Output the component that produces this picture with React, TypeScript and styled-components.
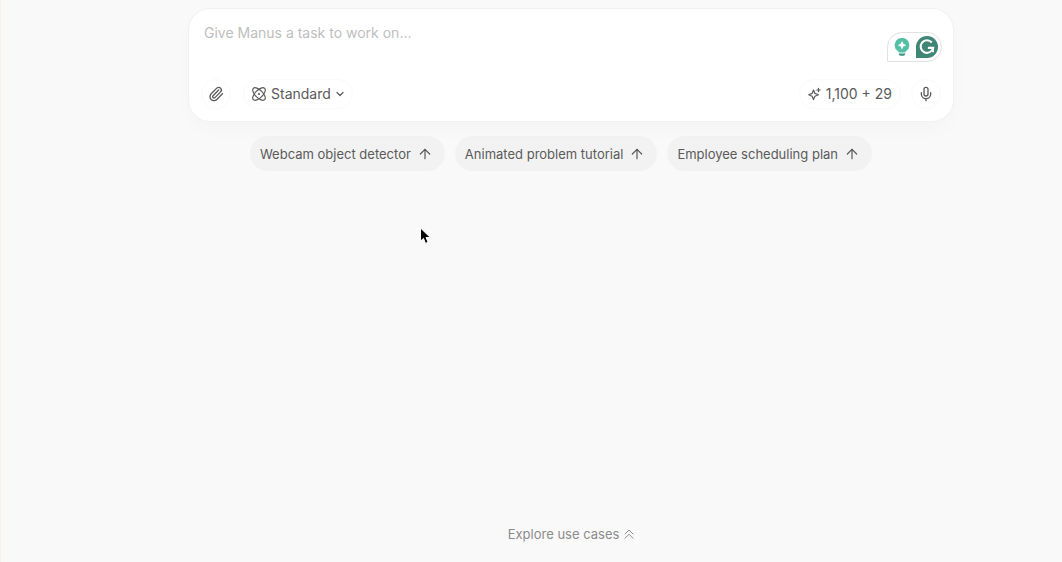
import React from "react";
import styled, { createGlobalStyle } from "styled-components";
import { ArrowUp, Mic, Paperclip } from "lucide-react";

const GlobalStyle = createGlobalStyle`
  *, *::before, *::after { box-sizing: border-box; }
  body {
    margin: 0;
    background: #f9f9f9;
    font-family: Inter, "Liberation Sans", sans-serif;
    color: #5a5a5a;
  }
  button, textarea { font: inherit; color: inherit; }
`;

const Page = styled.main`
  position: relative;
  display: flex;
  flex-direction: column;
  align-items: center;
  min-height: 100vh;
  padding: 8px 0 17px 79px;
  border-left: 1px solid #fcefe6;
`;

const Composer = styled.form`
  position: relative;
  display: flex;
  flex-direction: column;
  width: 100%;
  max-width: 766px;
  padding: 12px;
  border: 1px solid #f1f1f1;
  border-radius: 22px;
  background: #ffffff;
  box-shadow: 0 8px 20px rgba(0, 0, 0, 0.02);
`;

const Prompt = styled.textarea`
  width: 100%;
  height: 58px;
  padding: 0 60px 0 3px;
  border: 0;
  outline: 0;
  resize: none;
  background: transparent;
  font-size: 14px;
  line-height: 24px;
  &::placeholder { color: #bebebe; opacity: 1; }
`;

const Toolbar = styled.div`
  display: flex;
  align-items: center;
  justify-content: space-between;
`;

const ToolGroup = styled.div<{ $gap: number }>`
  display: flex;
  align-items: center;
  gap: ${(p) => p.$gap}px;
`;

const ToolButton = styled.button<{ $round?: boolean }>`
  display: flex;
  align-items: center;
  justify-content: center;
  gap: 5px;
  width: ${(p) => (p.$round ? "30px" : "auto")};
  height: 30px;
  padding: ${(p) => (p.$round ? "0" : "0 8px")};
  border: 1px solid #fafafa;
  border-radius: 15px;
  background: transparent;
  font-size: 14px;
  line-height: 20px;
`;

const Suggestions = styled.nav`
  display: flex;
  flex-wrap: wrap;
  justify-content: center;
  gap: 10px;
  margin-top: 14px;
  padding-right: 20px;
`;

const Chip = styled.button`
  display: flex;
  align-items: center;
  gap: 6px;
  height: 35px;
  padding: 0 12px 0 10px;
  border: 0;
  border-radius: 18px;
  background: #f2f2f2;
  font-size: 13px;
  line-height: 20px;
`;

const ExploreLink = styled.a`
  display: flex;
  align-items: center;
  gap: 5px;
  margin-top: auto;
  color: #8c8c8c;
  font-size: 13px;
  line-height: 22px;
  text-decoration: none;
`;

const Assistant = styled.div`
  position: absolute;
  top: 23px;
  right: 11px;
  display: flex;
  align-items: center;
  gap: 6px;
  height: 30px;
  padding: 0 3px 0 6px;
  border: 1px solid #dfe2e1;
  border-radius: 15px 15px 15px 0;
  background: #ffffff;
`;

const AssistantButton = styled.button`
  display: flex;
  padding: 0;
  border: 0;
  background: transparent;
`;

const Pointer = styled.svg`
  position: absolute;
  top: 226px;
  left: 418px;
  pointer-events: none;
`;

const ModeIcon = () => (
  <svg width="14" height="14" viewBox="0 0 14 14" fill="none" stroke="currentColor" strokeWidth="1.2" aria-hidden="true">
    <ellipse cx="7" cy="7" rx="8" ry="3.8" transform="rotate(45 7 7)" />
    <ellipse cx="7" cy="7" rx="8" ry="3.8" transform="rotate(-45 7 7)" />
    <circle cx="7" cy="7" r="1.1" fill="currentColor" stroke="none" />
  </svg>
);

const ChevronIcon = () => (
  <svg width="8" height="6" viewBox="0 0 8 6" fill="none" stroke="currentColor" strokeWidth="1.2" strokeLinecap="round" strokeLinejoin="round" aria-hidden="true">
    <path d="m1 1.5 3 3 3-3" />
  </svg>
);

const DoubleChevronIcon = () => (
  <svg width="10" height="10" viewBox="0 0 10 10" fill="none" stroke="currentColor" strokeLinecap="round" strokeLinejoin="round" aria-hidden="true">
    <path d="m1 5 4-4 4 4M1 9.2l4-4 4 4" />
  </svg>
);

const CreditIcon = () => (
  <svg width="13" height="14" viewBox="0 0 13 14" fill="none" stroke="currentColor" strokeWidth="1.2" strokeLinejoin="round" strokeLinecap="round" aria-hidden="true">
    <path d="M5.5 3 6.9 6.4 10.4 7.8 6.9 9.2 5.5 12.6 4.1 9.2.7 7.8 4.1 6.4Z" />
    <path d="M10.5 1.3v3.4M8.8 3h3.4" />
  </svg>
);

const BulbIcon = () => (
  <svg width="16" height="20" viewBox="0 0 16 20" aria-hidden="true">
    <path d="M8 1a7.2 7.2 0 0 0-4.2 13.1c.5.4.9.9 1.1 1.4h6.2c.2-.5.6-1 1.1-1.4A7.2 7.2 0 0 0 8 1Z" fill="#55bfa5" />
    <path d="M4.7 16.5h6.6c-.2 1.6-1.1 2.3-2.3 2.3H7c-1.2 0-2.1-.7-2.3-2.3Z" fill="#3d9480" />
    <path d="M8 4 9.4 6.8 12.2 8.2 9.4 9.6 8 12.4 6.6 9.6 3.8 8.2 6.6 6.8Z" fill="#fff" />
  </svg>
);

const CheckerLogo = () => (
  <svg width="22" height="22" viewBox="0 0 22 22" aria-hidden="true">
    <path d="M11 0a11 11 0 1 1 0 22H0V11A11 11 0 0 1 11 0Z" fill="#3f8677" />
    <path d="M15.8 6.5a6.3 6.3 0 1 0 1.3 5.4h-5.2" fill="none" stroke="#fff" strokeWidth="2.1" />
    <path d="M17 11v5.2" fill="none" stroke="#fff" strokeWidth="1.8" />
  </svg>
);

export default function App() {
  return (
    <>
      <GlobalStyle />
      <Page>
        <Composer onSubmit={(e) => e.preventDefault()}>
          <Prompt aria-label="Task" placeholder="Give Manus a task to work on..." />
          <Toolbar>
            <ToolGroup $gap={12}>
              <ToolButton type="button" $round aria-label="Attach file">
                <Paperclip size={16} strokeWidth={2} />
              </ToolButton>
              <ToolButton type="button">
                <ModeIcon />
                Standard
                <ChevronIcon />
              </ToolButton>
            </ToolGroup>
            <ToolGroup $gap={10}>
              <ToolButton type="button">
                <CreditIcon />
                1,100 + 29
              </ToolButton>
              <ToolButton type="button" $round aria-label="Voice input">
                <Mic size={16} strokeWidth={2} />
              </ToolButton>
            </ToolGroup>
          </Toolbar>
          <Assistant>
            <AssistantButton type="button" aria-label="Writing ideas"><BulbIcon /></AssistantButton>
            <AssistantButton type="button" aria-label="Check writing"><CheckerLogo /></AssistantButton>
          </Assistant>
        </Composer>
        <Suggestions aria-label="Suggestions">
          {["Webcam object detector", "Animated problem tutorial", "Employee scheduling plan"].map((label) => (
            <Chip key={label} type="button">
              {label}
              <ArrowUp size={16} strokeWidth={1.8} />
            </Chip>
          ))}
        </Suggestions>
        <ExploreLink href="#use-cases">
          Explore use cases
          <DoubleChevronIcon />
        </ExploreLink>
        <Pointer width="13" height="20" viewBox="0 0 13 20" aria-hidden="true">
          <path d="M1.5 2v13.2l3-2.8 2 5 2.6-1.1-2-4.8h4.2Z" fill="#000" stroke="#fff" strokeWidth="1" />
        </Pointer>
      </Page>
    </>
  );
}
